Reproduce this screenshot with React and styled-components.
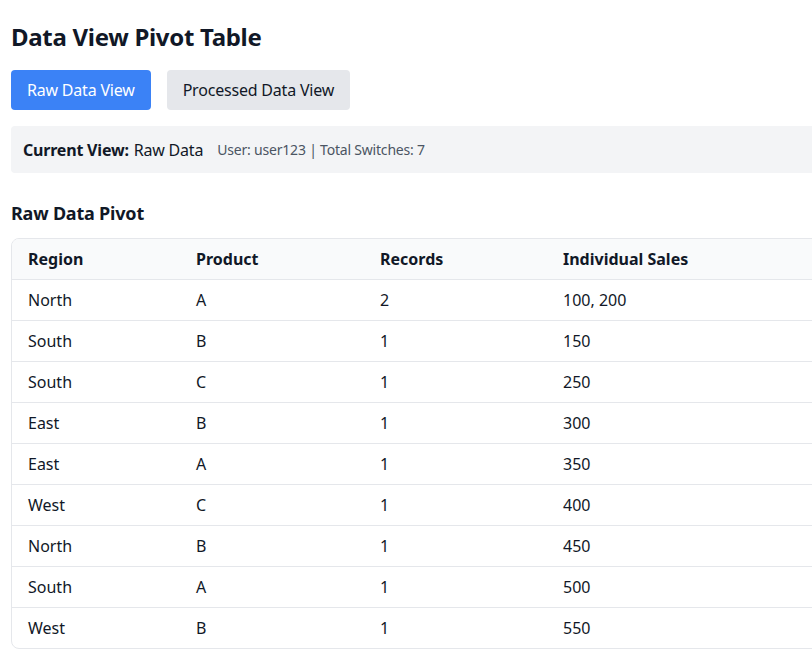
import React, { useState } from "react";
import styled, { createGlobalStyle } from "styled-components";

const Global = createGlobalStyle`
  html, body { margin: 0; padding: 0; background: #fff; overflow: hidden; }
  body { font-family: "Noto Sans", "Open Sans", sans-serif; color: #111827; }
  * { box-sizing: border-box; }
`;

const Page = styled.div`
  width: 1000px;
  padding: 21px 11px 16px;
`;

const Title = styled.h1`
  font-size: 24px;
  font-weight: 700;
  margin: 0 0 17px;
  line-height: 32px;
  letter-spacing: -0.3px;
`;

const Toolbar = styled.div`
  display: flex;
  gap: 16px;
  margin-bottom: 16px;
`;

const ToggleButton = styled.button`
  height: 40px;
  padding: 0 16px;
  border: none;
  border-radius: 4px;
  font-family: inherit;
  font-size: 16px;
  letter-spacing: -0.2px;
  cursor: pointer;
  background: ${(p) => (p.$active ? "#3b82f6" : "#e5e7eb")};
  color: ${(p) => (p.$active ? "#ffffff" : "#111827")};
`;

const StatusBar = styled.div`
  display: flex;
  align-items: center;
  height: 47px;
  padding: 0 12px;
  background: #f3f4f6;
  border-radius: 4px;
  font-size: 16px;
  margin-bottom: 28px;
  letter-spacing: -0.2px;
`;

const StatusLabel = styled.strong`
  font-weight: 700;
  margin-right: 5px;
`;

const StatusMeta = styled.span`
  margin-left: 14px;
  font-size: 14px;
  color: #4b5563;
`;

const SectionTitle = styled.h2`
  font-size: 18px;
  font-weight: 700;
  margin: 0 0 13px;
  line-height: 24px;
  letter-spacing: -0.2px;
`;

const TableWrap = styled.div`
  border: 1px solid #e5e7eb;
  border-radius: 8px;
  overflow: hidden;
`;

const Table = styled.table`
  width: 100%;
  border-collapse: collapse;
  table-layout: fixed;
  font-size: 16px;
`;

const HeadCell = styled.th`
  text-align: left;
  font-weight: 700;
  background: #f9fafb;
  height: 40px;
  padding: 0 16px;
  border-bottom: 1px solid #e5e7eb;
`;

const Row = styled.tr`
  &:not(:last-child) td { border-bottom: 1px solid #e5e7eb; }
`;

const Cell = styled.td`
  height: 41px;
  padding: 0 16px;
`;

const rows = [
  ["North", "A", 2, "100, 200"],
  ["South", "B", 1, "150"],
  ["South", "C", 1, "250"],
  ["East", "B", 1, "300"],
  ["East", "A", 1, "350"],
  ["West", "C", 1, "400"],
  ["North", "B", 1, "450"],
  ["South", "A", 1, "500"],
  ["West", "B", 1, "550"],
];

export default function App() {
  const [view, setView] = useState("raw");
  return (
    <Page>
      <Global />
      <Title>Data View Pivot Table</Title>
      <Toolbar>
        <ToggleButton $active={view === "raw"} onClick={() => setView("raw")}>
          Raw Data View
        </ToggleButton>
        <ToggleButton $active={view === "processed"} onClick={() => setView("processed")}>
          Processed Data View
        </ToggleButton>
      </Toolbar>
      <StatusBar>
        <StatusLabel>Current View:</StatusLabel> Raw Data
        <StatusMeta>User: user123 | Total Switches: 7</StatusMeta>
      </StatusBar>
      <SectionTitle>Raw Data Pivot</SectionTitle>
      <TableWrap>
        <Table>
          <colgroup>
            <col style={{ width: 168 }} />
            <col style={{ width: 184 }} />
            <col style={{ width: 183 }} />
            <col />
          </colgroup>
          <thead>
            <tr>
              <HeadCell>Region</HeadCell>
              <HeadCell>Product</HeadCell>
              <HeadCell>Records</HeadCell>
              <HeadCell>Individual Sales</HeadCell>
            </tr>
          </thead>
          <tbody>
            {rows.map((r, i) => (
              <Row key={i}>
                {r.map((c, j) => (
                  <Cell key={j}>{c}</Cell>
                ))}
              </Row>
            ))}
          </tbody>
        </Table>
      </TableWrap>
    </Page>
  );
}
